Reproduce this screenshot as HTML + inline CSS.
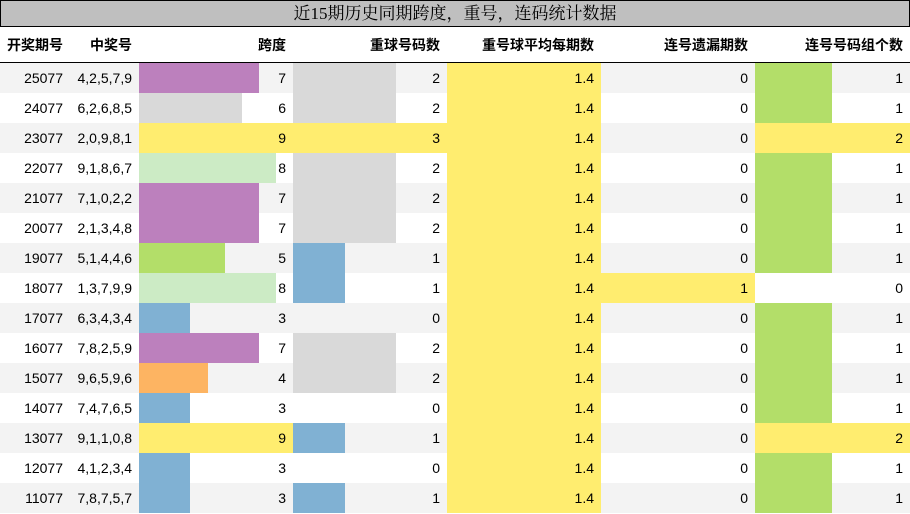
<!DOCTYPE html>
<html><head><meta charset="utf-8"><style>
*{margin:0;padding:0;box-sizing:border-box}
body{width:910px;height:514px;background:#fff;font-family:"Liberation Sans","Noto Sans CJK SC",sans-serif;font-size:14px;color:#000;position:relative;overflow:hidden}
.title{position:absolute;left:0;top:0;width:910px;height:27px;background:#bfbfbf;border:1px solid #000;text-align:center;font:17px/25px "Liberation Serif","Noto Serif CJK SC",serif}
.hdr{position:absolute;top:27px;left:0;width:910px;height:36px;border-bottom:1px solid #000;font-weight:bold}
.hdr div,.row div.c{position:absolute;top:0;text-align:right;padding-right:7px}
.hdr div{line-height:36px}
.row{position:absolute;left:0;width:910px;height:30px}
.row div.c{line-height:30px;height:30px}
.bar{position:absolute;top:0;height:30px}
</style></head><body>
<div class="title">近15期历史同期跨度，重号，连码统计数据</div>
<div class="hdr">
<div style="left:0;width:70px">开奖期号</div>
<div style="left:70px;width:69px">中奖号</div>
<div style="left:139px;width:154px">跨度</div>
<div style="left:293px;width:154px">重球号码数</div>
<div style="left:447px;width:154px">重号球平均每期数</div>
<div style="left:601px;width:154px">连号遗漏期数</div>
<div style="left:755px;width:155px">连号号码组个数</div>
</div>
<div id="rows"></div>
<script>
var d=[["25077","4,2,5,7,9",7,2,0,1],["24077","6,2,6,8,5",6,2,0,1],["23077","2,0,9,8,1",9,3,0,2],["22077","9,1,8,6,7",8,2,0,1],["21077","7,1,0,2,2",7,2,0,1],["20077","2,1,3,4,8",7,2,0,1],["19077","5,1,4,4,6",5,1,0,1],["18077","1,3,7,9,9",8,1,1,0],["17077","6,3,4,3,4",3,0,0,1],["16077","7,8,2,5,9",7,2,0,1],["15077","9,6,5,9,6",4,2,0,1],["14077","7,4,7,6,5",3,0,0,1],["13077","9,1,1,0,8",9,1,0,2],["12077","4,1,2,3,4",3,0,0,1],["11077","7,8,7,5,7",3,1,0,1]];
var kc={3:"#80b1d3",4:"#fdb462",5:"#b3de69",6:"#d9d9d9",7:"#bc80bd",8:"#ccebc5",9:"#ffed6f"};
var cc={1:"#80b1d3",2:"#d9d9d9",3:"#ffed6f"};
var h="";
d.forEach(function(r,i){
var bg=i%2==0?"#f3f3f3":"#fff";
h+='<div class="row" style="top:'+(63+i*30)+'px;background:'+bg+'">';
h+='<div class="bar" style="left:139px;width:'+Math.round(r[2]*17.15)+'px;background:'+kc[r[2]]+'"></div>';
if(r[3])h+='<div class="bar" style="left:293px;width:'+Math.round(r[3]*51.5)+'px;background:'+cc[r[3]]+'"></div>';
h+='<div class="bar" style="left:447px;width:154px;background:#ffed6f"></div>';
if(r[4])h+='<div class="bar" style="left:601px;width:154px;background:#ffed6f"></div>';
if(r[5])h+='<div class="bar" style="left:755px;width:'+(r[5]==2?155:77)+'px;background:'+(r[5]==2?"#ffed6f":"#b3de69")+'"></div>';
h+='<div class="c" style="left:0;width:70px">'+r[0]+'</div>';
h+='<div class="c" style="left:70px;width:69px">'+r[1]+'</div>';
h+='<div class="c" style="left:139px;width:154px">'+r[2]+'</div>';
h+='<div class="c" style="left:293px;width:154px">'+r[3]+'</div>';
h+='<div class="c" style="left:447px;width:154px">1.4</div>';
h+='<div class="c" style="left:601px;width:154px">'+r[4]+'</div>';
h+='<div class="c" style="left:755px;width:155px">'+r[5]+'</div>';
h+='</div>';});
document.getElementById("rows").innerHTML=h;
</script>
</body></html>
